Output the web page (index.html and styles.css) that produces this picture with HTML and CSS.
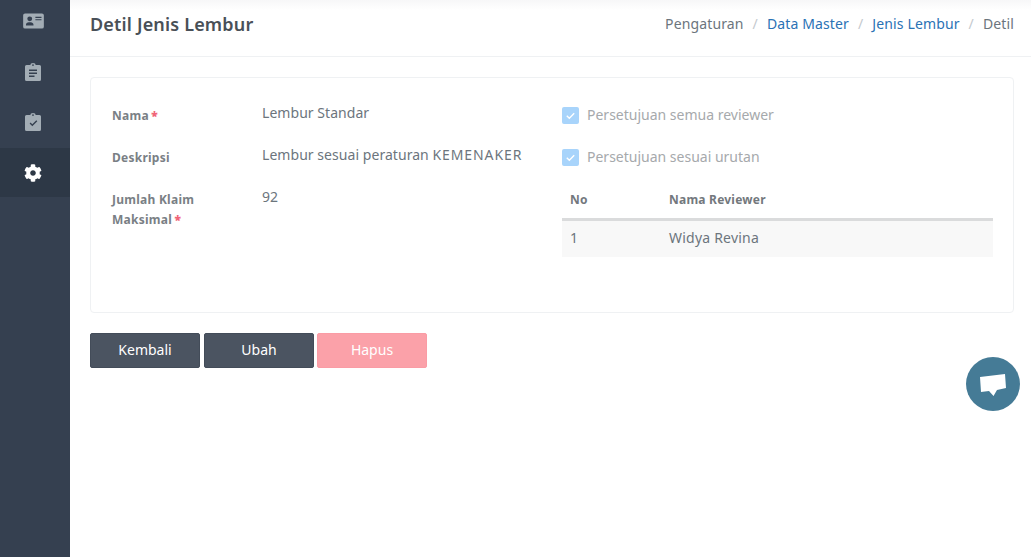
FILE: index.html
```html
<!DOCTYPE html>
<html lang="id">
<head>
<meta charset="utf-8">
<title>Detil Jenis Lembur</title>
<link rel="stylesheet" href="styles.css">
</head>
<body>
<div class="app">
  <nav class="sidebar">
    <a class="nav-item"><svg class="icon-card" viewBox="0 0 22 17"><path fill-rule="evenodd" d="M2 .5h18a2 2 0 0 1 2 2v12a2 2 0 0 1-2 2H2a2 2 0 0 1-2-2v-12a2 2 0 0 1 2-2zM7 3.600a2.600 2.600 0 1 0 0 5.200 2.600 2.600 0 0 0 0-5.200zM3 12.600c0-1.600 1.300-2.800 3-2.800h2c1.700 0 3 1.200 3 2.800v.7H3zM13 4h6.500v1.200H13zM13 6.600h6.500v1.200H13z"/></svg></a>
    <a class="nav-item"><svg class="icon-clip" viewBox="0 0 16 18"><path fill-rule="evenodd" d="M5.300 2a2.700 2 0 0 1 5.400 0H14.500a1.500 1.500 0 0 1 1.500 1.500v13a1.500 1.500 0 0 1-1.500 1.500h-13A1.500 1.500 0 0 1 0 16.500v-13A1.500 1.500 0 0 1 1.500 2zM8 1.200a.9.9 0 1 0 0 1.800.9.9 0 0 0 0-1.800zM4 6.600v1.400h8V6.600zM4 9.600v1.400h8V9.600zM4 12.600v1.400h5.500v-1.400z"/></svg></a>
    <a class="nav-item"><svg class="icon-clip" viewBox="0 0 16 18"><path fill-rule="evenodd" d="M5.300 2a2.700 2 0 0 1 5.400 0H14.500a1.500 1.500 0 0 1 1.500 1.500v13a1.500 1.500 0 0 1-1.500 1.500h-13A1.500 1.500 0 0 1 0 16.500v-13A1.500 1.500 0 0 1 1.500 2zM8 1.200a.9.9 0 1 0 0 1.800.9.9 0 0 0 0-1.800zM12.300 8.200l-1-1-4 4-1.700-1.700-1 1 2.700 2.700z"/></svg></a>
    <a class="nav-item active"><svg class="icon-cog" viewBox="0 0 512 512"><path d="M487.400 315.700l-42.600-24.600c4.300-23.200 4.300-47 0-70.200l42.600-24.600c4.900-2.800 7.100-8.600 5.500-14-11.100-35.600-30-67.800-54.700-94.600-3.800-4.100-10-5.100-14.800-2.300L380.800 110c-17.900-15.400-38.500-27.300-60.800-35.100V25.800c0-5.600-3.900-10.500-9.400-11.700-36.700-8.200-74.300-7.800-109.200 0-5.500 1.200-9.400 6.100-9.400 11.700V75c-22.200 7.900-42.800 19.800-60.800 35.100L88.700 85.500c-4.900-2.800-11-1.900-14.800 2.300-24.700 26.700-43.600 58.900-54.700 94.600-1.700 5.400.6 11.200 5.500 14L67.300 221c-4.300 23.200-4.300 47 0 70.200l-42.600 24.600c-4.900 2.800-7.100 8.600-5.500 14 11.100 35.600 30 67.800 54.700 94.600 3.800 4.100 10 5.100 14.800 2.300l42.600-24.600c17.900 15.400 38.500 27.300 60.800 35.100v49.200c0 5.600 3.900 10.500 9.400 11.700 36.700 8.200 74.300 7.800 109.200 0 5.500-1.200 9.400-6.100 9.400-11.700v-49.200c22.200-7.900 42.800-19.800 60.800-35.100l42.600 24.600c4.900 2.800 11 1.900 14.800-2.300 24.700-26.700 43.600-58.900 54.700-94.600 1.500-5.500-.7-11.300-5.600-14.100zM256 336c-44.100 0-80-35.900-80-80s35.900-80 80-80 80 35.900 80 80-35.900 80-80 80z"/></svg></a>
  </nav>
  <div class="main">
    <header class="topbar">
      <h1 class="title">Detil Jenis Lembur</h1>
      <ol class="crumbs">
        <li>Pengaturan</li>
        <li class="sep">/</li>
        <li class="link">Data Master</li>
        <li class="sep">/</li>
        <li class="link">Jenis Lembur</li>
        <li class="sep">/</li>
        <li>Detil</li>
      </ol>
    </header>
    <section class="content">
      <div class="card">
        <div class="col-left">
          <div class="field f-nama"><span class="label">Nama <b class="req">*</b></span><span class="value">Lembur Standar</span></div>
          <div class="field f-desk"><span class="label">Deskripsi</span><span class="value">Lembur sesuai peraturan <span class="caps">KEMENAKER</span></span></div>
          <div class="field f-jml"><span class="label">Jumlah Klaim Maksimal <b class="req">*</b></span><span class="value">92</span></div>
        </div>
        <div class="col-right">
          <label class="check c-one"><span class="box"><svg viewBox="0 0 16 16"><path d="M4.500 8.300l2.400 2.300 4.600-4.700" /></svg></span>Persetujuan semua reviewer</label>
          <label class="check c-two"><span class="box"><svg viewBox="0 0 16 16"><path d="M4.500 8.300l2.400 2.300 4.600-4.700" /></svg></span>Persetujuan sesuai urutan</label>
          <table class="table">
            <thead><tr><th class="c-no">No</th><th>Nama Reviewer</th></tr></thead>
            <tbody><tr><td>1</td><td>Widya Revina</td></tr></tbody>
          </table>
        </div>
      </div>
      <div class="actions">
        <button class="btn" type="button">Kembali</button>
        <button class="btn" type="button">Ubah</button>
        <button class="btn danger" type="button">Hapus</button>
      </div>
    </section>
  </div>
  <button class="chat" type="button" aria-label="Chat"><svg viewBox="0 0 28 25"><path d="M1 5 26 2 27 16 18 18 14.500 24 10 19 2 20z"/></svg></button>
</div>
</body>
</html>
```
FILE: styles.css
```css
* { box-sizing: border-box; }
html, body { margin: 0; height: 100%; }
body { font-family: "Noto Sans", "Open Sans", sans-serif; color: #6c757d; background: #fff; overflow: hidden; }
.app { display: flex; height: 557px; position: relative; }
.sidebar { width: 70px; flex: none; background: #354050; display: flex; flex-direction: column; }
.nav-item { height: 49px; margin-bottom: 1px; padding: 0 4px 2px 0; display: flex; align-items: center; justify-content: center; }
.nav-item:first-child { height: 44px; margin-bottom: 4px; }
.nav-item svg { fill: #a3adb5; display: block; }
.nav-item.active { background: #2d3846; padding-bottom: 0; }
.nav-item.active svg { fill: #fff; }
.icon-card { width: 21px; height: 16px; }
.icon-clip { width: 16px; height: 18px; }
.icon-cog { width: 18px; height: 18px; }
.main { flex: 1; min-width: 0; display: flex; flex-direction: column; }
.topbar { height: 57px; flex: none; display: flex; align-items: flex-start; justify-content: space-between; padding: 0 17px 0 20px; border-bottom: 1px solid #eff1f3; background: linear-gradient(#f7f7f8, #fff 10px); }
.title { margin: 11px 0 0; font-size: 18px; line-height: 26px; font-weight: 600; letter-spacing: .17px; color: #495057; }
.crumbs { list-style: none; margin: 14px 0 0; padding: 0; display: flex; gap: 9px; font-size: 14px; line-height: 20px; letter-spacing: .13px; color: #6c757d; }
.crumbs .sep { color: #c4c9ce; }
.crumbs .link { color: #2a72b5; }
.content { padding: 20px 17px 0 20px; flex: 1; }
.card { height: 236px; border: 1px solid #eff1f3; border-radius: 4px; padding: 0 20px; display: flex; background: #fff; }
.col-left { width: 451px; flex: none; }
.col-right { flex: 1; min-width: 0; }
.field { display: flex; }
.f-nama { padding-top: 25px; height: 67px; }
.f-desk { height: 42px; }
.label { width: 151px; flex: none; font-size: 12px; line-height: 20px; font-weight: 700; letter-spacing: .25px; color: #7a7f85; padding: 3px 40px 0 1px; }
.req { color: #f06578; margin-left: -1px; }
.value { font-size: 14px; line-height: 20px; letter-spacing: .05px; color: #6c757d; }
.caps { letter-spacing: .9px; }
.check { display: flex; align-items: center; font-size: 14px; line-height: 20px; color: #a6a9ac; }
.c-one { margin-top: 27px; }
.c-two { margin-top: 22px; }
.box { width: 17px; height: 17px; flex: none; border-radius: 2px; background: #a8d4fb; margin-right: 8px; display: block; }
.box svg { display: block; width: 17px; height: 17px; fill: none; stroke: #fff; stroke-width: 1.300; }
.table { width: 100%; border-collapse: collapse; margin-top: 14px; font-size: 14px; letter-spacing: .22px; }
.table th { height: 38px; text-align: left; padding: 1px 8px 0; font-size: 12px; font-weight: 700; color: #73787d; border-bottom: 3px solid #dadbdc; }
.table td { height: 38px; padding: 0 8px 2px; background: #f8f8f8; color: #6c757d; }
.c-no { width: 99px; }
.actions { display: flex; gap: 4px; margin-top: 20px; }
.btn { width: 110px; height: 35px; border: 1px solid #434c59; border-radius: 2px; background: #4b5461; color: #fff; font: 14px/20px "Noto Sans", sans-serif; padding: 0 0 2px; }
.btn.danger { background: #fba1a9; border-color: #fa9ca5; margin-left: -1px; }
.chat { position: absolute; left: 966px; top: 357px; width: 54px; height: 54px; border: 0; border-radius: 50%; background: #457b96; padding: 15px 13px 14px; display: block; }
.chat svg { display: block; width: 28px; height: 25px; fill: #fff; }
```
